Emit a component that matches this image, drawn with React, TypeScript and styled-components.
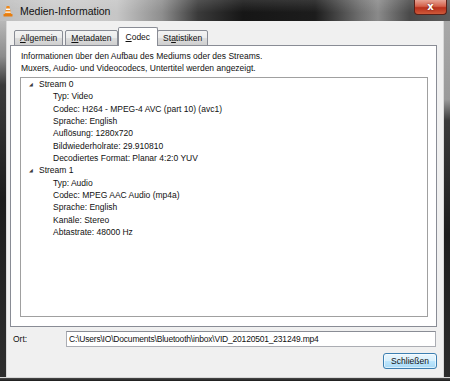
import React from 'react';
import styled, { createGlobalStyle } from 'styled-components';

const GlobalStyle = createGlobalStyle`
  html, body {
    margin: 0;
    padding: 0;
    background: #000;
  }
  body {
    font-family: "Liberation Sans", Arial, sans-serif;
  }
`;

type TreeItem = {
  label: string;
  children: string[];
};

const streams: TreeItem[] = [
  {
    label: 'Stream 0',
    children: [
      'Typ: Video',
      'Codec: H264 - MPEG-4 AVC (part 10) (avc1)',
      'Sprache: English',
      'Auflösung: 1280x720',
      'Bildwiederholrate: 29.910810',
      'Decodiertes Format: Planar 4:2:0 YUV',
    ],
  },
  {
    label: 'Stream 1',
    children: [
      'Typ: Audio',
      'Codec: MPEG AAC Audio (mp4a)',
      'Sprache: English',
      'Kanäle: Stereo',
      'Abtastrate: 48000 Hz',
    ],
  },
];

const tabs = [
  { pre: '', key: 'A', post: 'llgemein' },
  { pre: '', key: 'M', post: 'etadaten' },
  { pre: '', key: 'C', post: 'odec' },
  { pre: 'St', key: 'a', post: 'tistiken' },
];

const VlcIcon: React.FC = () => (
  <svg width="10" height="12" viewBox="0 0 10 12">
    <path d="M3.6 1 L6.4 1 L8.2 9 L1.8 9 Z" fill="#f08a1c" />
    <path d="M3.2 3.4 L6.8 3.4 L7.2 5 L2.8 5 Z" fill="#fff" />
    <path d="M2.5 6.4 L7.5 6.4 L7.9 7.8 L2.1 7.8 Z" fill="#fff" />
    <rect x="0.5" y="9" width="9" height="2.5" rx="0.6" fill="#e57d10" />
  </svg>
);

const App: React.FC = () => {
  return (
    <>
      <GlobalStyle />
      <Window>
        <TitleBar>
          <VlcIcon />
          <Title>Medien-Information</Title>
          <CloseButton>x</CloseButton>
        </TitleBar>
        <FrameRow>
          <SideFrame />
          <Client>
            <TabRow>
              {tabs.map((t, i) => (
                <Tab key={t.post} active={i === 2}>
                  {t.pre}
                  <u>{t.key}</u>
                  {t.post}
                </Tab>
              ))}
            </TabRow>
            <TabPanel>
              <Description>
                Informationen über den Aufbau des Mediums oder des Streams.
                <br />
                Muxers, Audio- und Videocodecs, Untertitel werden angezeigt.
              </Description>
              <TreeBox>
                {streams.map(s => (
                  <React.Fragment key={s.label}>
                    <TreeRow level={0}>
                      <Arrow>◢</Arrow>
                      {s.label}
                    </TreeRow>
                    {s.children.map(c => (
                      <TreeRow key={c} level={1}>
                        {c}
                      </TreeRow>
                    ))}
                  </React.Fragment>
                ))}
              </TreeBox>
            </TabPanel>
            <PathRow>
              <PathLabel>Ort:</PathLabel>
              <PathField>C:\Users\IO\Documents\Bluetooth\inbox\VID_20120501_231249.mp4</PathField>
            </PathRow>
            <ButtonRow>
              <PushButton>Schließen</PushButton>
            </ButtonRow>
          </Client>
          <SideFrame right />
        </FrameRow>
        <BottomFrame />
      </Window>
    </>
  );
};

export default App;

const Window = styled.div`
  width: 450px;
  height: 381px;
  display: flex;
  flex-direction: column;
  overflow: hidden;
  background: #2a2a2a;
`;

const TitleBar = styled.div`
  height: 21px;
  flex: none;
  display: flex;
  align-items: center;
  padding-left: 3px;
  gap: 7px;
  background:
    linear-gradient(180deg, rgba(255, 255, 255, 0.12) 0%, rgba(0, 0, 0, 0) 60%),
    linear-gradient(
      90deg,
      #bdbdbd 0%,
      #cdcdcd 12%,
      #c6c6c6 26%,
      #8e8e8e 36%,
      #3a3a3a 44%,
      #161616 54%,
      #1c1c1c 70%,
      #6f6f6f 80%,
      #8a8a8a 84%,
      #4a4a4a 91%,
      #5c5c5c 100%
    );
`;

const Title = styled.span`
  font-size: 10.5px;
  color: #111;
  margin-top: 1px;
`;

const CloseButton = styled.div`
  margin-left: auto;
  margin-right: 3px;
  align-self: flex-start;
  width: 33px;
  height: 15px;
  box-sizing: border-box;
  border: 1px solid #5a2018;
  border-top: none;
  border-radius: 0 0 4px 4px;
  background: linear-gradient(180deg, #e6a394 0%, #d4614b 45%, #b8301c 55%, #cf5a3a 100%);
  color: #fff;
  font-family: "DejaVu Sans", sans-serif;
  font-weight: bold;
  font-size: 10px;
  line-height: 13px;
  text-align: center;
  text-shadow: 0 0 2px #5a1a10;
`;

const FrameRow = styled.div`
  flex: 1;
  display: flex;
  min-height: 0;
`;

const SideFrame = styled.div<{ right?: boolean }>`
  width: 7px;
  flex: none;
  background: ${p =>
    p.right
      ? 'linear-gradient(180deg, #a8a8a8 0%, #9a9a9a 22%, #3a3a3a 28%, #1e1e1e 60%, #2c2c2c 100%)'
      : 'linear-gradient(180deg, #b8b8b8 0%, #8c8c8c 10%, #3a3a3a 18%, #1c1c1c 50%, #2e2e2e 100%)'};
  box-shadow: ${p => (p.right ? 'inset 1px 0 0 #d8d8d8' : 'inset -1px 0 0 #d8d8d8')};
`;

const BottomFrame = styled.div`
  height: 4px;
  flex: none;
  background: linear-gradient(180deg, #5a5a5a 0%, #1a1a1a 100%);
  box-shadow: inset 0 1px 0 #d8d8d8;
`;

const Client = styled.div`
  flex: 1;
  display: flex;
  flex-direction: column;
  background: #f0f0f0;
  padding: 6px 6px 0 3px;
  font-size: 8.5px;
  color: #111;
`;

const TabRow = styled.div`
  display: flex;
  align-items: flex-end;
  height: 19px;
  padding-left: 4px;
  position: relative;
  z-index: 1;
  margin-bottom: -1px;
`;

const Tab = styled.div<{ active?: boolean }>`
  box-sizing: border-box;
  height: ${p => (p.active ? '19px' : '16px')};
  padding: ${p => (p.active ? '0 7px' : '0 5px')};
  margin: ${p => (p.active ? '0 -2px' : '0')};
  margin-right: ${p => (p.active ? '-1px' : '2px')};
  border: 1px solid #898c95;
  border-bottom: ${p => (p.active ? 'none' : '1px solid #898c95')};
  border-radius: 2px 2px 0 0;
  background: ${p => (p.active ? '#fff' : 'linear-gradient(180deg, #f3f3f3 0%, #ebebeb 50%, #dddddd 51%, #cfcfcf 100%)')};
  display: flex;
  align-items: center;
  position: relative;
  z-index: ${p => (p.active ? 2 : 1)};

  u {
    text-decoration-thickness: 1px;
    text-underline-offset: 1px;
  }
`;

const TabPanel = styled.div`
  flex: none;
  height: 282px;
  box-sizing: border-box;
  border: 1px solid #898c95;
  background: #fff;
  padding: 4px 8px 9px 9px;
  display: flex;
  flex-direction: column;
`;

const Description = styled.div`
  line-height: 12px;
  padding-left: 1px;
  margin-bottom: 3px;
`;

const TreeBox = styled.div`
  flex: 1;
  border: 1px solid #a0a0a0;
  background: #fff;
`;

const TreeRow = styled.div<{ level: number }>`
  height: 12.35px;
  line-height: 12.35px;
  display: flex;
  align-items: center;
  padding-left: ${p => (p.level === 0 ? '8px' : '32px')};
  white-space: nowrap;
`;

const Arrow = styled.span`
  font-family: "DejaVu Sans", sans-serif;
  font-size: 5px;
  color: #3c3c3c;
  width: 10px;
`;

const PathRow = styled.div`
  display: flex;
  align-items: center;
  margin-top: 4px;
  height: 16px;
`;

const PathLabel = styled.div`
  width: 56px;
  padding-left: 3px;
  box-sizing: border-box;
  flex: none;
`;

const PathField = styled.div`
  flex: 1;
  height: 16px;
  box-sizing: border-box;
  margin-right: 1px;
  border: 1px solid #abadb3;
  border-top-color: #8a8d95;
  background: #fff;
  padding-left: 2px;
  line-height: 14px;
  letter-spacing: -0.2px;
  white-space: nowrap;
  overflow: hidden;
`;

const ButtonRow = styled.div`
  display: flex;
  justify-content: flex-end;
  margin-top: 6px;
`;

const PushButton = styled.div`
  width: 54px;
  height: 16px;
  box-sizing: border-box;
  border: 1px solid #3c7fb1;
  border-radius: 3px;
  background: linear-gradient(180deg, #eaf6fd 0%, #d9f0fc 48%, #bee6fd 52%, #a7d9f5 100%);
  box-shadow: inset 0 0 0 1px rgba(255, 255, 255, 0.6);
  text-align: center;
  line-height: 14px;
`;
